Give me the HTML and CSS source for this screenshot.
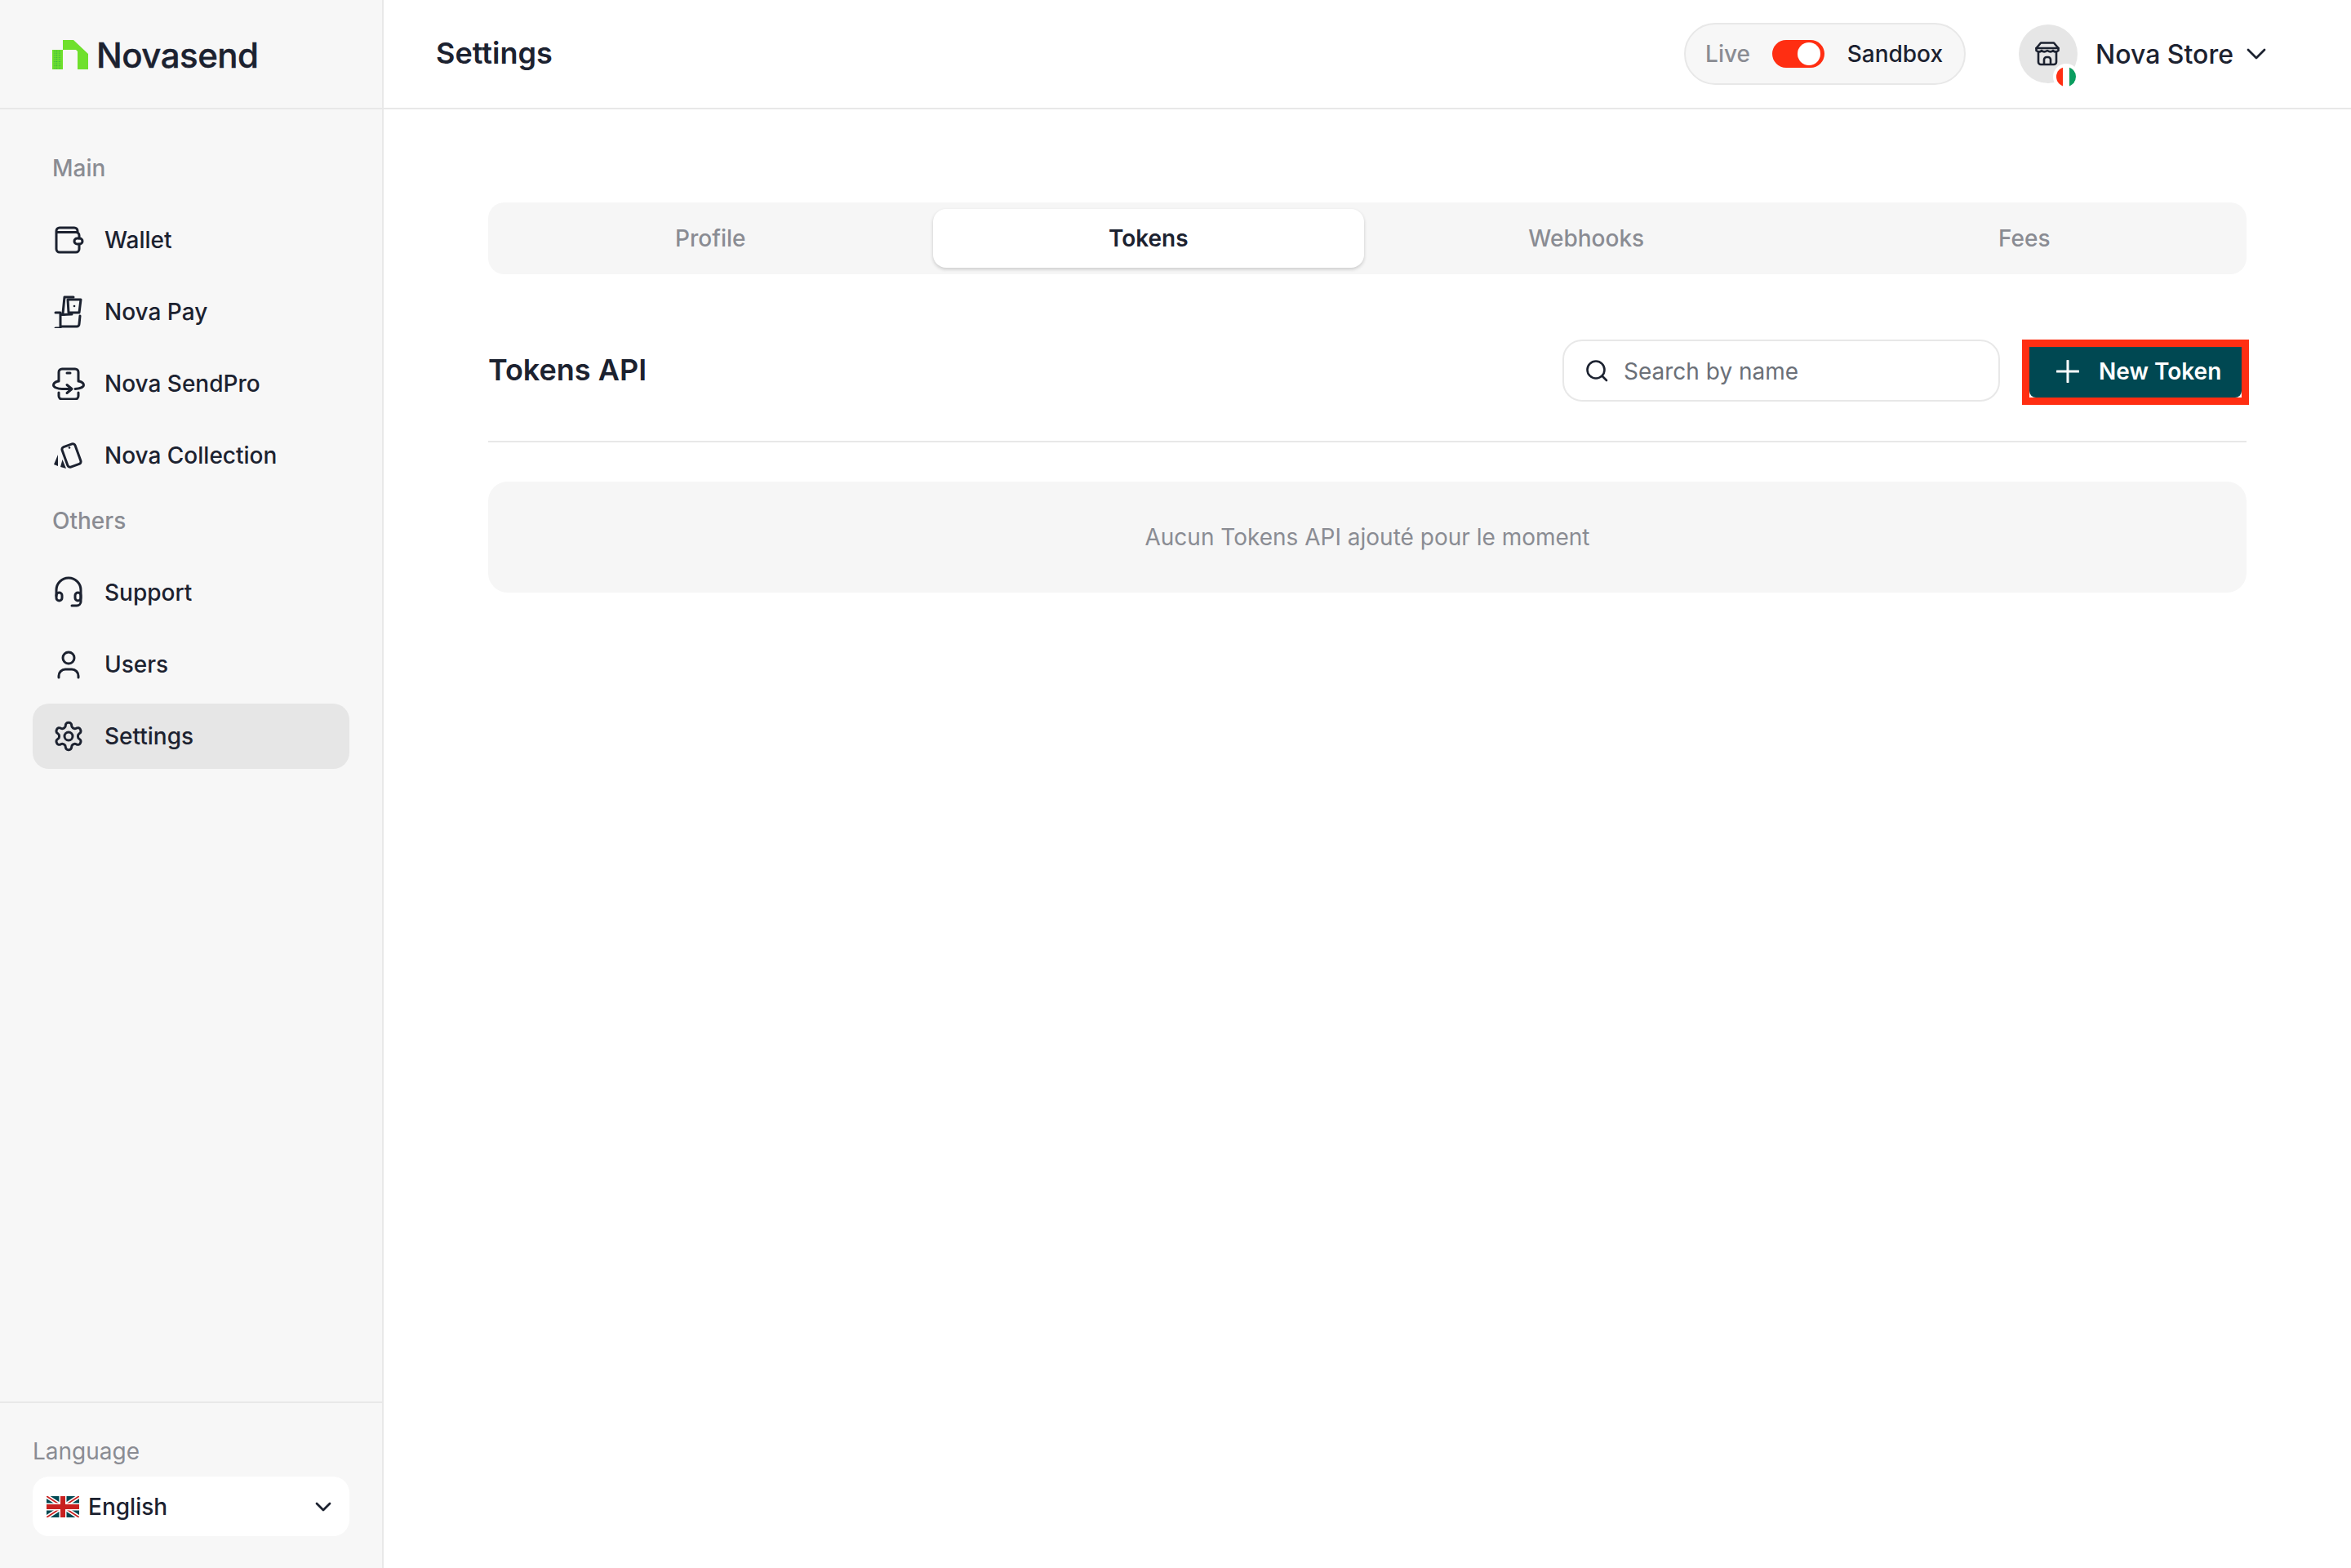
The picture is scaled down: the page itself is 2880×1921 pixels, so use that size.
FILE: index.html
```html
<!DOCTYPE html>
<html lang="en">
<head>
<meta charset="utf-8">
<title>Settings - Novasend</title>
<link rel="stylesheet" href="styles.css">
</head>
<body>
<div class="app">
  <aside class="sidebar">
    <div class="brand">
      <svg class="brand-mark" viewBox="0 0 44 36" width="44" height="36">
        <defs><pattern id="dots" width="2.6" height="2.6" patternUnits="userSpaceOnUse"><rect width="1.1" height="1.1" fill="#1f9d55"/></pattern></defs>
        <rect x="0" y="12" width="13" height="24" fill="#6fe02c"/>
        <rect x="1.5" y="13" width="9" height="23" fill="url(#dots)"/>
        <path d="M13 0H26L44 17V36H31V14L29 12H13Z" fill="#6fe02c"/>
      </svg>
      <span class="brand-name">Novasend</span>
    </div>
    <nav class="nav">
      <div class="nav-label">Main</div>
      <div class="nav-group">
        <a class="nav-item">
          <svg class="icon" viewBox="0 0 40 40"><path d="M33 25V31a4 4 0 0 1-4 4H9a4 4 0 0 1-4-4V9a4 4 0 0 1 4-4H27a4 4 0 0 1 4 4V10.500M5 10.500H29a4 4 0 0 1 4 4V18"/><rect x="27" y="18" width="10" height="7" rx="3.500"/></svg>
          <span>Wallet</span>
        </a>
        <a class="nav-item">
          <svg class="icon" viewBox="0 0 40 40"><path d="M4 21H10V40M4 40H10M10 38H30a3 3 0 0 0 3-3L34 25M10 23C13 24 18 23 24 23"/><path d="M26 2H15L13 22"/><path d="M19 5H35L33 21H20Z"/><circle cx="27" cy="13" r="1.300" class="solid"/></svg>
          <span>Nova Pay</span>
        </a>
        <a class="nav-item">
          <svg class="icon" viewBox="0 0 40 40"><path d="M8 17V6a4 4 0 0 1 4-4H28a4 4 0 0 1 4 4V17M8 31V35a4 4 0 0 0 4 4H28a4 4 0 0 0 4-4V31M18 7H22"/><path d="M7 17C3 18 1.500 20 1.500 22C1.500 24 6 26.500 12 26.500H23M18 21.500L24 26.500L18 31.500M33 17C37 18 38.500 20 38.500 22C38.500 24 34 26 28 26.500"/></svg>
          <span>Nova SendPro</span>
        </a>
        <a class="nav-item">
          <svg class="icon" viewBox="0 0 40 40"><rect x="15" y="7" width="17" height="26" rx="3" transform="rotate(-20 23.500 20)"/><circle cx="21" cy="10.500" r="1.300" class="solid"/><path class="solid" d="M2 31L7 19V33ZM10 34L12.500 25L17 36Z"/></svg>
          <span>Nova Collection</span>
        </a>
      </div>
      <div class="nav-label">Others</div>
      <div class="nav-group">
        <a class="nav-item">
          <svg class="icon" viewBox="0 0 40 40"><path d="M5 24V17a15 15 0 0 1 30 0V31a5 5 0 0 1-5 5H24"/><rect x="5" y="20" width="7" height="10" rx="3.500"/><rect x="28" y="20" width="7" height="10" rx="3.500"/></svg>
          <span>Support</span>
        </a>
        <a class="nav-item">
          <svg class="icon" viewBox="0 0 40 40"><circle cx="20" cy="12" r="7"/><path d="M8 36V34a8 8 0 0 1 8-8H24a8 8 0 0 1 8 8V36"/></svg>
          <span>Users</span>
        </a>
        <a class="nav-item active">
          <svg class="icon" viewBox="0 0 24 24"><path class="thin" d="M12.220 2h-.44a2 2 0 0 0-2 2v.18a2 2 0 0 1-1 1.730l-.43.25a2 2 0 0 1-2 0l-.15-.08a2 2 0 0 0-2.730.73l-.22.38a2 2 0 0 0 .73 2.730l.15.1a2 2 0 0 1 1 1.720v.51a2 2 0 0 1-1 1.740l-.15.09a2 2 0 0 0-.73 2.730l.22.38a2 2 0 0 0 2.730.73l.15-.08a2 2 0 0 1 2 0l.43.25a2 2 0 0 1 1 1.730V20a2 2 0 0 0 2 2h.44a2 2 0 0 0 2-2v-.18a2 2 0 0 1 1-1.730l.43-.25a2 2 0 0 1 2 0l.15.08a2 2 0 0 0 2.730-.73l.22-.39a2 2 0 0 0-.73-2.730l-.15-.08a2 2 0 0 1-1-1.740v-.5a2 2 0 0 1 1-1.740l.15-.09a2 2 0 0 0 .73-2.730l-.22-.38a2 2 0 0 0-2.730-.73l-.15.08a2 2 0 0 1-2 0l-.43-.25a2 2 0 0 1-1-1.730V4a2 2 0 0 0-2-2z"/><circle class="thin" cx="12" cy="12" r="3"/></svg>
          <span>Settings</span>
        </a>
      </div>
    </nav>
    <div class="language">
      <div class="language-label">Language</div>
      <div class="language-select">
        <svg class="flag-uk" viewBox="0 0 40 26" width="40" height="26">
          <rect width="40" height="26" fill="#004852"/>
          <path d="M0 0L40 26M40 0L0 26" stroke="#fff" stroke-width="5"/>
          <path d="M0 0L40 26M40 0L0 26" stroke="#c8201f" stroke-width="1.800"/>
          <path d="M20 0V26M0 13H40" stroke="#fff" stroke-width="9"/>
          <path d="M20 0V26M0 13H40" stroke="#c8201f" stroke-width="6"/>
        </svg>
        <span class="language-name">English</span>
        <svg class="chev" viewBox="0 0 20 12" width="20" height="12"><path d="M2 2L10 10L18 2"/></svg>
      </div>
    </div>
  </aside>

  <div class="main">
    <header class="topbar">
      <h1 class="page-title">Settings</h1>
      <div class="topbar-right">
        <div class="env-switch">
          <span class="env-off">Live</span>
          <span class="toggle"><span class="knob"></span></span>
          <span class="env-on">Sandbox</span>
        </div>
        <div class="account">
          <div class="avatar">
            <svg class="store" viewBox="0 0 30 30" width="30" height="30"><path d="M7 1.500H23L28.500 8V11C26 13 24 13 22 11C20 13 18 13 15 11C12 13 10 13 8 11C6 13 4 13 1.500 11V8Z"/><path d="M1.500 8H28.500M4 13V25a3 3 0 0 0 3 3H23a3 3 0 0 0 3-3V13M11 28V22a3 3 0 0 1 3-3H16a3 3 0 0 1 3 3V28"/></svg>
            <span class="badge">
              <svg viewBox="0 0 24 24" width="24" height="24"><rect width="8" height="24" fill="#ff2e12"/><rect x="8" width="8" height="24" fill="#fff"/><rect x="16" width="8" height="24" fill="#0a9d5f"/></svg>
            </span>
          </div>
          <span class="account-name">Nova Store</span>
          <svg class="chev chev-lg" viewBox="0 0 24 14" width="24" height="14"><path d="M2 2L12 12L22 2"/></svg>
        </div>
      </div>
    </header>

    <main class="content">
      <div class="tabs">
        <div class="tab">Profile</div>
        <div class="tab tab-active">Tokens</div>
        <div class="tab">Webhooks</div>
        <div class="tab">Fees</div>
      </div>

      <div class="toolbar">
        <h2 class="section-title">Tokens API</h2>
        <div class="toolbar-actions">
          <div class="search">
            <svg class="search-icon" viewBox="0 0 28 28" width="28" height="28"><circle cx="13" cy="13" r="10.500"/><path d="M21 21L26 26"/></svg>
            <span class="search-text">Search by name</span>
          </div>
          <div class="highlight">
            <button class="new-token" type="button">
              <svg class="plus" viewBox="0 0 28 28" width="28" height="28"><path d="M14 1V27M1 14H27"/></svg>
              <span>New Token</span>
            </button>
          </div>
        </div>
      </div>

      <div class="empty">Aucun Tokens API ajouté pour le moment</div>
    </main>
  </div>
</div>
</body>
</html>
```

FILE: styles.css
```css
* { box-sizing: border-box; }

html, body {
  margin: 0;
  padding: 0;
  height: 100%;
  background: #fff;
}

body {
  font-family: "Inter", "Liberation Sans", sans-serif;
  font-size: 28px;
  color: #1c2230;
}

.app {
  display: flex;
  min-height: 100vh;
}

/* Sidebar */
.sidebar {
  flex: 0 0 470px;
  display: flex;
  flex-direction: column;
  background: #f7f7f7;
  border-right: 2px solid #e8e8e8;
}

.brand {
  height: 134px;
  display: flex;
  align-items: center;
  gap: 10px;
  padding: 2px 0 0 64px;
  border-bottom: 2px solid #e8e8e8;
}

.brand-mark { flex: none; }

.brand-name {
  font-size: 42px;
  font-weight: 500;
  letter-spacing: -0.5px;
  color: #1c2230;
  -webkit-text-stroke: 0.4px #1c2230;
}

.nav {
  flex: 1;
  padding: 52px 40px 0;
}

.nav-label {
  height: 40px;
  line-height: 40px;
  padding-left: 24px;
  margin-bottom: 28px;
  font-weight: 500;
  color: #8a8c93;
}

.nav-group {
  display: flex;
  flex-direction: column;
  gap: 8px;
  margin-bottom: 20px;
}

.nav-item {
  height: 80px;
  display: flex;
  align-items: center;
  gap: 24px;
  padding-left: 24px;
  border-radius: 20px;
  font-weight: 500;
  color: #1c2230;
}

.nav-item.active { background: #e6e6e6; }

.icon {
  flex: none;
  width: 40px;
  height: 40px;
  fill: none;
  stroke: #1c2230;
  stroke-width: 3;
  stroke-linecap: round;
  stroke-linejoin: round;
}

.icon .solid {
  fill: #1c2230;
  stroke: none;
}

.icon .thin { stroke-width: 1.800; }

.language {
  height: 204px;
  padding: 39px 40px 0;
  border-top: 2px solid #e8e8e8;
}

.language-label {
  height: 40px;
  line-height: 40px;
  color: #8a8c93;
  margin-bottom: 11px;
}

.language-select {
  height: 73px;
  display: flex;
  align-items: center;
  padding: 0 22px 0 17px;
  background: #fff;
  border-radius: 20px;
}

.flag-uk { flex: none; }

.language-name {
  flex: 1;
  margin-left: 11px;
  font-weight: 500;
}

.chev {
  flex: none;
  fill: none;
  stroke: #1c2230;
  stroke-width: 2.800;
  stroke-linecap: round;
  stroke-linejoin: round;
}

/* Main column */
.main {
  flex: 1;
  display: flex;
  flex-direction: column;
  min-width: 0;
}

.topbar {
  height: 134px;
  display: flex;
  align-items: center;
  justify-content: space-between;
  padding: 0 104px 0 64px;
  border-bottom: 2px solid #e8e8e8;
}

.page-title {
  margin: 0 0 2px;
  font-size: 36px;
  font-weight: 600;
}

.topbar-right {
  display: flex;
  align-items: center;
  gap: 65px;
}

.env-switch {
  width: 345px;
  height: 76px;
  display: flex;
  align-items: center;
  justify-content: space-between;
  padding: 0 26px 0 24px;
  background: #f7f7f7;
  border: 2px solid #e8e8e8;
  border-radius: 38px;
  font-weight: 500;
}

.env-off { color: #8a8c93; }

.toggle {
  width: 64px;
  height: 34px;
  display: flex;
  align-items: center;
  justify-content: flex-end;
  padding-right: 5px;
  background: #ff2e12;
  border-radius: 17px;
}

.knob {
  width: 28px;
  height: 28px;
  border-radius: 50%;
  background: #fff;
}

.account {
  display: flex;
  align-items: center;
}

.avatar {
  position: relative;
  width: 72px;
  height: 72px;
  display: flex;
  align-items: center;
  justify-content: center;
  border-radius: 50%;
  background: #e6e6e6;
}

.store {
  margin-right: 2px;
  fill: none;
  stroke: #1c2230;
  stroke-width: 2.600;
  stroke-linecap: round;
  stroke-linejoin: round;
}

.badge {
  position: absolute;
  right: -2px;
  bottom: -8px;
  width: 32px;
  height: 32px;
  display: flex;
  align-items: center;
  justify-content: center;
  border-radius: 50%;
  background: #fff;
}

.badge svg { border-radius: 50%; }

.account-name {
  margin-left: 22px;
  font-size: 32px;
  font-weight: 500;
}

.chev-lg { margin-left: 16px; }

/* Content */
.content {
  flex: 1;
  padding: 114px 128px 0;
}

.tabs {
  display: grid;
  grid-template-columns: repeat(4, 1fr);
  gap: 8px;
  height: 88px;
  padding: 8px;
  background: #f6f6f6;
  border-radius: 20px;
}

.tab {
  display: flex;
  align-items: center;
  justify-content: center;
  border-radius: 16px;
  font-weight: 500;
  color: #8a8c93;
}

.tab-active {
  background: #fff;
  color: #1c2230;
  font-weight: 600;
  box-shadow: 0 2px 4px rgba(0, 0, 0, 0.18);
}

.toolbar {
  display: flex;
  align-items: center;
  justify-content: space-between;
  margin-top: 80px;
  padding-bottom: 44px;
  border-bottom: 2px solid #e8e8e8;
}

.section-title {
  margin: 0 0 6px;
  font-size: 36px;
  font-weight: 600;
}

.toolbar-actions {
  display: flex;
  align-items: center;
  gap: 27px;
  margin-right: -3px;
}

.search {
  width: 536px;
  height: 76px;
  margin-bottom: 4px;
  display: flex;
  align-items: center;
  gap: 19px;
  padding-left: 26px;
  border: 2px solid #e8e8e8;
  border-radius: 24px;
}

.search-icon {
  flex: none;
  fill: none;
  stroke: #1c2230;
  stroke-width: 2.600;
  stroke-linecap: round;
}

.search-text {
  padding-top: 2px;
  color: #6b7078;
}

.highlight {
  width: 278px;
  height: 80px;
  border: 9px solid #ff2e12;
  background: #fff;
}

.new-token {
  width: 100%;
  height: 100%;
  display: flex;
  align-items: center;
  gap: 24px;
  padding: 0 0 3px 33px;
  border: 0;
  border-radius: 0 0 8px 8px;
  background: #004852;
  color: #fff;
  font-family: inherit;
  font-size: 28px;
  font-weight: 600;
}

.plus {
  flex: none;
  fill: none;
  stroke: #fff;
  stroke-width: 3;
  stroke-linecap: round;
}

.empty {
  height: 136px;
  margin-top: 48px;
  display: flex;
  align-items: center;
  justify-content: center;
  background: #f6f6f6;
  border-radius: 24px;
  color: #8a8c93;
}
```
